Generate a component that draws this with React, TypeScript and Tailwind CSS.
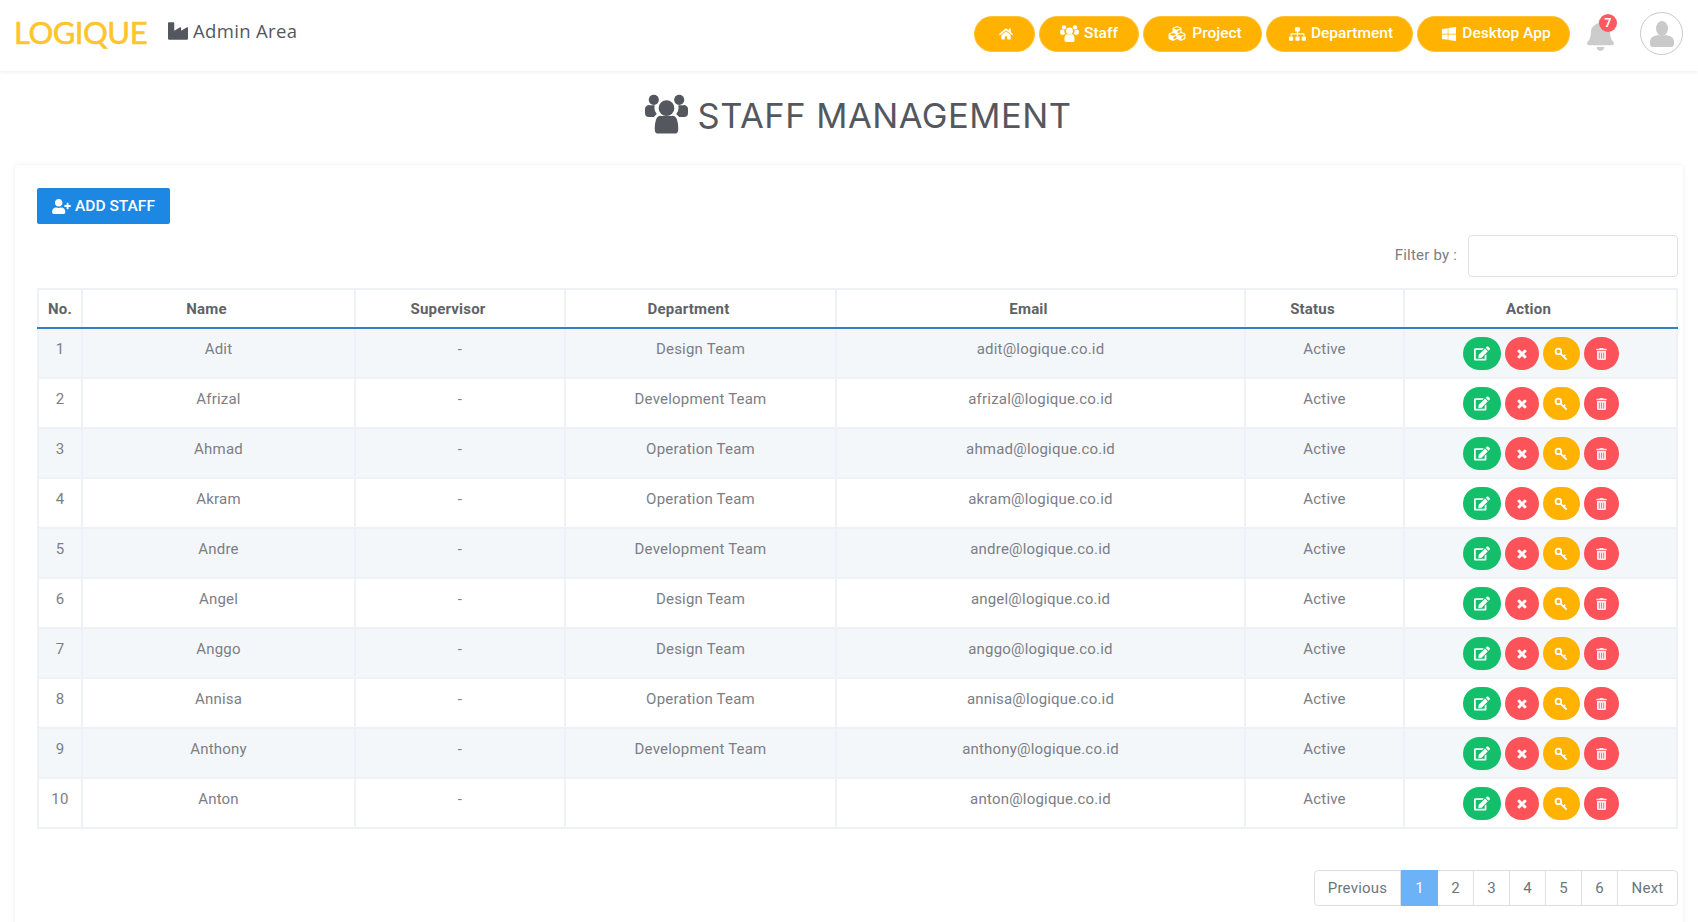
import React from 'react';
import { FaHome, FaCubes, FaSitemap, FaWindows, FaIndustry, FaBell, FaUserPlus, FaEdit, FaTimes, FaTrashAlt } from 'react-icons/fa';

const staff = [
    { name: 'Adit', dept: 'Design Team', email: 'adit@logique.co.id' },
    { name: 'Afrizal', dept: 'Development Team', email: 'afrizal@logique.co.id' },
    { name: 'Ahmad', dept: 'Operation Team', email: 'ahmad@logique.co.id' },
    { name: 'Akram', dept: 'Operation Team', email: 'akram@logique.co.id' },
    { name: 'Andre', dept: 'Development Team', email: 'andre@logique.co.id' },
    { name: 'Angel', dept: 'Design Team', email: 'angel@logique.co.id' },
    { name: 'Anggo', dept: 'Design Team', email: 'anggo@logique.co.id' },
    { name: 'Annisa', dept: 'Operation Team', email: 'annisa@logique.co.id' },
    { name: 'Anthony', dept: 'Development Team', email: 'anthony@logique.co.id' },
    { name: 'Anton', dept: '', email: 'anton@logique.co.id' },
];

const PeopleIcon = ({ className }: { className?: string }) => (
    <svg viewBox="0 0 44 40" className={className} fill="currentColor">
        <circle cx="9" cy="5.5" r="5.2" />
        <circle cx="35" cy="5.5" r="5.2" />
        <path d="M5 11h5a10 10 0 0 0 2 9l-3 3H4a4 4 0 0 1-4-4v-4a4 4 0 0 1 5-4zM39 11h-5a10 10 0 0 1-2 9l3 3h5a4 4 0 0 0 4-4v-4a4 4 0 0 0-5-4z" />
        <circle cx="22" cy="14" r="8" />
        <path d="M12 24a5 5 0 0 1 5-2h10a5 5 0 0 1 5 2c1 2 2 6 2 10v2a4 4 0 0 1-4 4H14a4 4 0 0 1-4-4v-2c0-4 1-8 2-10z" />
    </svg>
);

const KeyIcon = ({ className }: { className?: string }) => (
    <svg viewBox="0 0 16 16" className={className} fill="none" stroke="currentColor" strokeWidth="2">
        <circle cx="5" cy="5" r="3.2" />
        <path d="M7.5 7.5l7 7M11 11l2-2" />
    </svg>
);

const pillClass = 'h-9 rounded-full bg-[#ffb300] text-white text-[15.5px] font-medium flex items-center justify-center gap-[5px] border border-[#ffc233]';
const thClass = 'border-2 border-[#eef1f5] border-b-2 border-b-[#2f80c4] font-bold text-[#5f6368] text-[15px] tracking-[0.2px] h-[39px] p-0 pt-px';
const tdClass = 'border-2 border-[#eef1f5] align-top pt-[8px] text-[15px] tracking-[0.2px] leading-[24px] text-[#7b7e85] text-center h-[50px] p-0';

function NavBar() {
    return (
        <nav className="h-[71px] bg-white shadow-[0_1px_4px_rgba(0,0,0,0.07)] flex items-center pl-[15px] pr-[15px] pb-[4px] relative">
            <div className="text-[#fcc52e] text-[31px] leading-none tracking-[-0.5px] font-['Lato',sans-serif] [-webkit-text-stroke:0.6px_#fcc52e] w-[154px] mb-[2px] -ml-px">LOGIQUE</div>
            <FaIndustry className="text-[#54585e] w-[20px] h-[20px] mb-[5px]" />
            <span className="ml-[5px] text-[#54585e] text-[18.5px] tracking-[0.35px] font-['Open_Sans',sans-serif] mb-[5px]">Admin Area</span>
            <div className="ml-auto flex items-center">
                <div className="flex gap-[4px] mr-[15px]">
                    <button className={`${pillClass} w-[61px] pl-[2px]`}><FaHome className="w-[14px] h-[14px]" /></button>
                    <button className={`${pillClass} w-[100px]`}><PeopleIcon className="w-[19px] h-[17px]" />Staff</button>
                    <button className={`${pillClass} w-[119px] pl-[4px]`}><FaCubes className="w-[20px] h-[17px]" />Project</button>
                    <button className={`${pillClass} w-[147px] pl-[3px]`}><FaSitemap className="w-[17px] h-[14px]" />Department</button>
                    <button className={`${pillClass} w-[153px] pl-[5px]`}><FaWindows className="w-[16px] h-[16px]" />Desktop App</button>
                </div>
                <div className="relative w-[30px] h-[36px] mr-[25px] flex items-end justify-center">
                    <FaBell className="text-[#cccccc] w-[27px] h-[33px]" />
                    <span className="absolute -top-[2px] right-[-2px] w-[18px] h-[18px] rounded-full bg-[#fb5a60] text-white text-[12px] font-bold flex items-center justify-center">7</span>
                </div>
                <div className="w-[43px] h-[43px] rounded-full border border-[#c8c8c8] flex items-center justify-center">
                    <svg viewBox="0 0 24 26" className="w-[24px] h-[26px] text-[#c9c9c9]" fill="currentColor">
                        <ellipse cx="12" cy="7.5" rx="6" ry="7.5" />
                        <path d="M0 21c0-5 4-6 8-7 2 1 6 1 8 0 4 1 8 2 8 7v2a3 3 0 0 1-3 3H3a3 3 0 0 1-3-3z" />
                    </svg>
                </div>
            </div>
        </nav>
    );
}

function ActionButtons() {
    return (
        <div className="flex justify-center gap-[4px] text-white">
            <button className="w-[38px] h-[33px] rounded-full bg-[#14bf6b] flex items-center justify-center"><FaEdit className="w-[16px] h-[15px]" /></button>
            <button className="w-[34px] h-[33px] rounded-full bg-[#fb5359] flex items-center justify-center"><FaTimes className="w-[12px] h-[12px] stroke-current stroke-[40]" /></button>
            <button className="w-[37px] h-[33px] rounded-full bg-[#ffb300] flex items-center justify-center"><KeyIcon className="w-[14px] h-[14px]" /></button>
            <button className="w-[35px] h-[33px] rounded-full bg-[#fb5359] flex items-center justify-center"><FaTrashAlt className="w-[11px] h-[12px] text-[#ffe6ea]" /></button>
        </div>
    );
}

export default function App() {
    return (
        <div className="h-[922px] overflow-hidden bg-white font-['Roboto',sans-serif]">
            <NavBar />
            <div className="flex justify-center items-center h-[90px] text-[#54585e] mb-[4px] pl-[18px]">
                <PeopleIcon className="w-[43px] h-[40px] mr-[10px] mb-[4px]" />
                <h1 className="text-[34.5px] font-['Inter',sans-serif] tracking-[0.5px] leading-none">STAFF MANAGEMENT</h1>
            </div>
            <div className="mx-[15px] h-[800px] rounded-[4px] bg-white shadow-[0_0_4px_rgba(0,0,0,0.08)] pt-[23px] pl-[22px] pr-[5px]">
                <button className="w-[133px] h-[36px] rounded-[2px] bg-[#1c88e3] text-white text-[15.5px] font-medium flex items-center justify-center gap-[4px] pt-px">
                    <FaUserPlus className="w-[19px] h-[15px]" />ADD STAFF
                </button>
                <div className="flex justify-end items-center mt-[11px] mb-[11px]">
                    <span className="text-[15px] tracking-[0.2px] text-[#7b7e85] mr-[11px] pb-[2px]">Filter by :</span>
                    <input className="w-[210px] h-[42px] rounded-[4px] border border-[#e0e2e6] bg-white" />
                </div>
                <table className="table-fixed border-collapse w-[1641px]">
                    <thead>
                        <tr>
                            <th className={`${thClass} w-[44px]`}>No.</th>
                            <th className={`${thClass} w-[273px] pr-[24px]`}>Name</th>
                            <th className={`${thClass} w-[210px] pr-[24px]`}>Supervisor</th>
                            <th className={`${thClass} w-[271px] pr-[24px]`}>Department</th>
                            <th className={`${thClass} w-[409px] pr-[24px]`}>Email</th>
                            <th className={`${thClass} w-[159px] pr-[24px]`}>Status</th>
                            <th className={`${thClass} pr-[24px]`}>Action</th>
                        </tr>
                    </thead>
                    <tbody>
                        {staff.map((s, i) => (
                            <tr key={s.name} className={i % 2 === 0 ? 'bg-[#f4f7fa]' : 'bg-white'}>
                                <td className={tdClass}>{i + 1}</td>
                                <td className={tdClass}>{s.name}</td>
                                <td className={tdClass}>-</td>
                                <td className={tdClass}>{s.dept}</td>
                                <td className={tdClass}>{s.email}</td>
                                <td className={tdClass}>Active</td>
                                <td className={tdClass}><ActionButtons /></td>
                            </tr>
                        ))}
                    </tbody>
                </table>
                <div className="flex justify-end mt-[41px]">
                    <div className="flex h-[36px] rounded-[4px] border border-[#dcdfe3] text-[15px] tracking-[0.2px] text-[#6c757d]">
                        <a className="w-[86px] flex items-center justify-center border-r border-[#dcdfe3]">Previous</a>
                        <a className="w-[37px] flex items-center justify-center bg-[#6cb2f7] text-white -my-px">1</a>
                        {['2', '3', '4', '5', '6'].map((p) => (
                            <a key={p} className="w-[36px] flex items-center justify-center border-r border-[#dcdfe3]">{p}</a>
                        ))}
                        <a className="w-[59px] flex items-center justify-center">Next</a>
                    </div>
                </div>
            </div>
        </div>
    );
}
